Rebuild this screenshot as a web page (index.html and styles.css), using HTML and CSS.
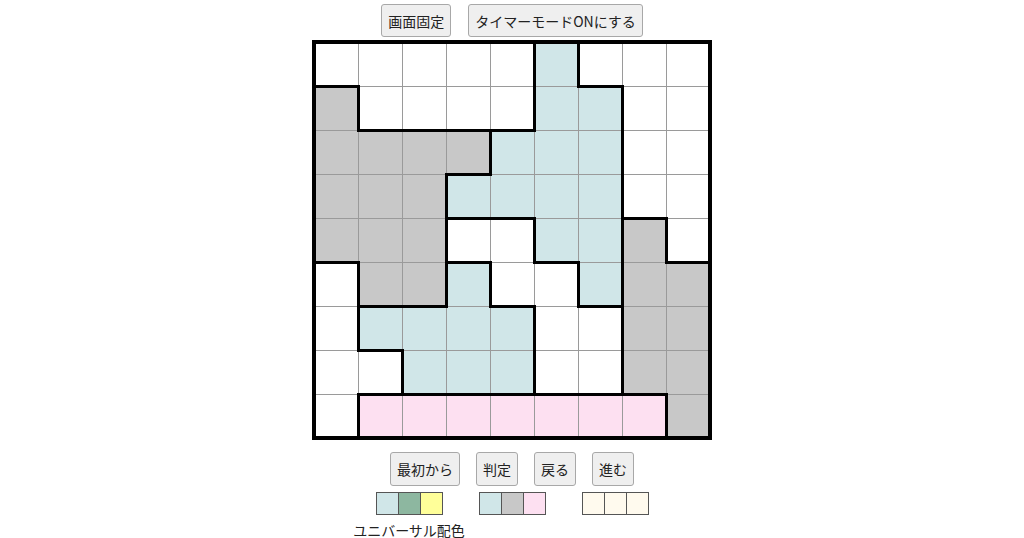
FILE: index.html
```html
<!DOCTYPE html>
<html lang="ja">
<head>
<meta charset="utf-8">
<title>パズル</title>
<link rel="stylesheet" href="styles.css">
</head>
<body>
<div class="page">
  <div class="toolbar top">
    <button class="btn">画面固定</button>
    <button class="btn">タイマーモードONにする</button>
  </div>
  <table class="board">
    <tr>
      <td class="d"></td><td></td><td></td><td></td><td class="r"></td><td class="b r"></td><td class="d"></td><td></td><td></td>
    </tr>
    <tr>
      <td class="g r"></td><td class="d"></td><td class="d"></td><td class="d"></td><td class="r d"></td><td class="b"></td><td class="b r"></td><td></td><td></td>
    </tr>
    <tr>
      <td class="g"></td><td class="g"></td><td class="g"></td><td class="g r d"></td><td class="b"></td><td class="b"></td><td class="b r"></td><td></td><td></td>
    </tr>
    <tr>
      <td class="g"></td><td class="g"></td><td class="g r"></td><td class="b d"></td><td class="b d"></td><td class="b"></td><td class="b r"></td><td class="d"></td><td></td>
    </tr>
    <tr>
      <td class="g d"></td><td class="g"></td><td class="g r"></td><td class="d"></td><td class="r"></td><td class="b d"></td><td class="b r"></td><td class="g r"></td><td class="d"></td>
    </tr>
    <tr>
      <td class="r"></td><td class="g d"></td><td class="g r d"></td><td class="b r"></td><td class="d"></td><td class="r"></td><td class="b r d"></td><td class="g"></td><td class="g"></td>
    </tr>
    <tr>
      <td class="r"></td><td class="b d"></td><td class="b"></td><td class="b"></td><td class="b r"></td><td></td><td class="r"></td><td class="g"></td><td class="g"></td>
    </tr>
    <tr>
      <td></td><td class="r d"></td><td class="b d"></td><td class="b d"></td><td class="b r d"></td><td class="d"></td><td class="r d"></td><td class="g d"></td><td class="g"></td>
    </tr>
    <tr>
      <td class="r"></td><td class="p"></td><td class="p"></td><td class="p"></td><td class="p"></td><td class="p"></td><td class="p"></td><td class="p r"></td><td class="g"></td>
    </tr>
  </table>
  <div class="toolbar bottom">
    <button class="btn">最初から</button>
    <button class="btn">判定</button>
    <button class="btn">戻る</button>
    <button class="btn">進む</button>
  </div>
  <div class="palettes">
    <div class="palette">
      <div class="swatches">
        <span class="sw sw-blue"></span><span class="sw sw-green"></span><span class="sw sw-yellow"></span>
      </div>
      <div class="palette-label">ユニバーサル配色</div>
    </div>
    <div class="palette">
      <div class="swatches">
        <span class="sw sw-blue"></span><span class="sw sw-gray"></span><span class="sw sw-pink"></span>
      </div>
    </div>
    <div class="palette">
      <div class="swatches">
        <span class="sw sw-cream"></span><span class="sw sw-cream"></span><span class="sw sw-cream"></span>
      </div>
    </div>
  </div>
</div>
</body>
</html>
```

FILE: styles.css
```css
html, body {
  margin: 0;
  padding: 0;
  background: #ffffff;
}

body {
  font-family: "Noto Sans CJK JP", "Noto Sans", sans-serif;
  color: #222;
}

.page {
  display: flex;
  flex-direction: column;
  align-items: center;
}

.toolbar {
  display: flex;
  gap: 16px;
}

.toolbar.top {
  margin-top: 4px;
  gap: 17px;
}

.toolbar.bottom {
  margin-top: 12px;
}

.btn {
  font-family: "Noto Sans CJK JP", "Noto Sans", sans-serif;
  font-size: 14px;
  line-height: 20px;
  height: 33px;
  padding: 0 6px;
  background: #efefef;
  color: #222;
  border: 1px solid #a8a8a8;
  border-radius: 3px;
}

.toolbar.bottom .btn {
  height: 34px;
}

.board {
  margin-top: 3px;
  border-collapse: collapse;
  table-layout: fixed;
  width: 400px;
  border: 4px solid #000;
}

.board tr {
  height: 44px;
}

.board td {
  padding: 0;
  border: 1px solid #9a9a9a;
  background: #ffffff;
}

.board td.g { background: #c8c8c8; }
.board td.b { background: #d0e6e8; }
.board td.p { background: #fde0f1; }

.board td.r { border-right: 3px solid #000; }
.board td.d { border-bottom: 3px solid #000; }

.palettes {
  display: flex;
  gap: 36px;
  margin-top: 6px;
}

.palette {
  width: 67px;
  display: flex;
  flex-direction: column;
  align-items: center;
}

.swatches {
  display: flex;
}

.sw {
  box-sizing: border-box;
  width: 23px;
  height: 23px;
  border: 1px solid #555;
}

.sw + .sw {
  margin-left: -1px;
}

.sw-blue { background: #d0e6e8; }
.sw-green { background: #8db7a0; }
.sw-yellow { background: #ffff99; }
.sw-gray { background: #c8c8c8; }
.sw-pink { background: #fde0f1; }
.sw-cream { background: #fffaee; }

.palette-label {
  margin-top: 5px;
  font-size: 14px;
  line-height: 20px;
  white-space: nowrap;
  color: #222;
}
```
